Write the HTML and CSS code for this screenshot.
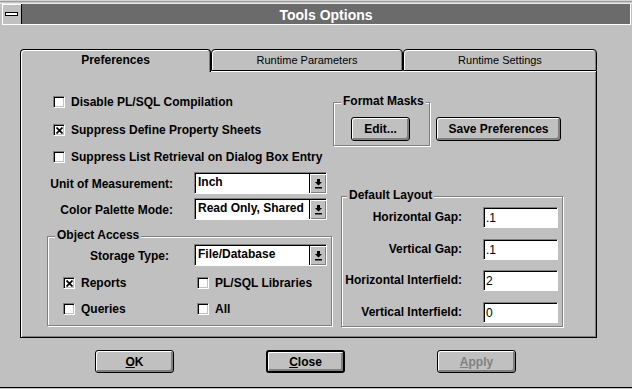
FILE: index.html
```html
<!DOCTYPE html>
<html>
<head>
<meta charset="utf-8">
<title>Tools Options</title>
<link rel="stylesheet" href="styles.css">
</head>
<body>
<div class="window">
  <div class="frame-top"></div>
  <div class="titlebar">
    <div class="sysmenu"><span class="dash"></span></div>
    <div class="caption">Tools Options</div>
  </div>
  <div class="body">
    <div class="tabs">
      <div class="tab active t1">Preferences</div>
      <div class="tab t2">Runtime Parameters</div>
      <div class="tab t3">Runtime Settings</div>
    </div>
    <div class="panel">
      <div class="left">
        <div class="checks">
          <div class="check-row"><span class="box"></span>Disable PL/SQL Compilation</div>
          <div class="check-row"><span class="box"><svg width="7" height="7" viewBox="0 0 7 7"><path d="M0.5 0.5L6.5 6.5M6.5 0.5L0.5 6.5" stroke="#000" stroke-width="1.7"/></svg></span>Suppress Define Property Sheets</div>
          <div class="check-row"><span class="box"></span>Suppress List Retrieval on Dialog Box Entry</div>
        </div>
        <div class="field-row first">
          <span class="label">Unit of Measurement:</span>
          <div class="combo"><span class="combo-text">Inch</span><span class="combo-btn"><svg width="7" height="10" viewBox="0 0 7 10"><path d="M2 0h3v3h2L3.5 6.5 0 3h2z" fill="#000"/><rect x="0" y="8" width="7" height="1.5" fill="#000"/></svg></span></div>
        </div>
        <div class="field-row second">
          <span class="label">Color Palette Mode:</span>
          <div class="combo"><span class="combo-text">Read Only, Shared</span><span class="combo-btn"><svg width="7" height="10" viewBox="0 0 7 10"><path d="M2 0h3v3h2L3.5 6.5 0 3h2z" fill="#000"/><rect x="0" y="8" width="7" height="1.5" fill="#000"/></svg></span></div>
        </div>
        <div class="group access">
          <span class="group-title">Object Access</span>
          <div class="field-row storage">
            <span class="label short">Storage Type:</span>
            <div class="combo"><span class="combo-text">File/Database</span><span class="combo-btn"><svg width="7" height="10" viewBox="0 0 7 10"><path d="M2 0h3v3h2L3.5 6.5 0 3h2z" fill="#000"/><rect x="0" y="8" width="7" height="1.5" fill="#000"/></svg></span></div>
          </div>
          <div class="acc-checks">
            <div class="check-row"><span class="box"><svg width="7" height="7" viewBox="0 0 7 7"><path d="M0.5 0.5L6.5 6.5M6.5 0.5L0.5 6.5" stroke="#000" stroke-width="1.7"/></svg></span>Reports</div>
            <div class="check-row"><span class="box"></span>PL/SQL Libraries</div>
            <div class="check-row"><span class="box"></span>Queries</div>
            <div class="check-row"><span class="box"></span>All</div>
          </div>
        </div>
      </div>
      <div class="right">
        <div class="format-row">
          <div class="group format">
            <span class="group-title">Format Masks</span>
            <button class="btn edit">Edit...</button>
          </div>
          <button class="btn save">Save Preferences</button>
        </div>
        <div class="group layout">
          <span class="group-title">Default Layout</span>
          <div class="dl-rows">
            <div class="dl-row"><span class="dl-label">Horizontal Gap:</span><span class="input">.1</span></div>
            <div class="dl-row"><span class="dl-label">Vertical Gap:</span><span class="input">.1</span></div>
            <div class="dl-row"><span class="dl-label">Horizontal Interfield:</span><span class="input">2</span></div>
            <div class="dl-row"><span class="dl-label">Vertical Interfield:</span><span class="input">0</span></div>
          </div>
        </div>
      </div>
    </div>
    <div class="buttons">
      <button class="btn bottom"><u>O</u>K</button>
      <button class="btn bottom default"><u>C</u>lose</button>
      <button class="btn bottom disabled"><u>A</u>pply</button>
    </div>
  </div>
</div>
</body>
</html>
```
FILE: styles.css
```css
* { box-sizing: border-box; }
html, body { margin: 0; padding: 0; }
body {
  background: #c0c0c0;
  font-family: "Liberation Sans", Arial, sans-serif;
  font-size: 12px;
  font-weight: bold;
  color: #000;
}
.window {
  width: 632px;
  height: 388px;
  background: #c0c0c0;
  border-bottom: 1px solid #000;
  overflow: hidden;
}
.frame-top {
  height: 4px;
  background: linear-gradient(#d4d4d4 0 1px, #9a9a9a 1px 2px, #c8c8c8 2px 3px, #e8e8e8 3px 4px);
}
.titlebar {
  display: flex;
  height: 21px;
  margin: 0 1px 0 2px;
  border-bottom: 1px solid #fff;
}
.sysmenu {
  width: 19px;
  height: 20px;
  background: #c0c0c0;
  display: flex;
  align-items: center;
  justify-content: center;
  box-shadow: inset 1px 1px 0 #fff;
}
.dash {
  width: 13px;
  height: 4px;
  background: #fff;
  border: 1px solid #000;
}
.caption {
  flex: 1;
  height: 20px;
  background: #6b6b6b;
  border-left: 1px solid #000;
  border-right: 1px solid #fff;
  color: #fff;
  font-size: 14px;
  line-height: 22px;
  text-align: center;
  overflow: hidden;
}
.body {
  padding: 24px 0 0 20px;
}
.tabs {
  display: flex;
  width: 577px;
  height: 22px;
}
.tab {
  height: 22px;
  border: 1px solid #000;
  border-radius: 4px 4px 0 0;
  box-shadow: inset 1px 1px 0 #fff, inset -1px 0 0 #808080;
  background: #c0c0c0;
  text-align: center;
  font-weight: normal;
  font-size: 11px;
  line-height: 21px;
}
.t1 { width: 191px; }
.t2 { width: 192px; }
.t3 { width: 194px; }
.tab.active {
  height: 23px;
  margin-bottom: -1px;
  border-bottom: none;
  position: relative;
  z-index: 1;
  font-weight: bold;
  font-size: 12px;
}
.panel {
  width: 577px;
  height: 267px;
  border: 1px solid #000;
  border-top: none;
  box-shadow: inset 1px 1px 0 #fff, inset -1px -1px 0 #808080;
  display: flex;
  padding: 23px 0 0 26px;
}
.left {
  width: 285px;
  flex: none;
  display: flex;
  flex-direction: column;
}
.checks {
  display: flex;
  flex-direction: column;
  gap: 11.5px;
  padding-left: 6px;
}
.check-row {
  display: flex;
  align-items: center;
  height: 16px;
  line-height: 16px;
  white-space: nowrap;
}
.box {
  width: 12px;
  height: 12px;
  flex: none;
  margin-right: 6px;
  background: #fff;
  border-top: 1px solid #808080;
  border-left: 1px solid #808080;
  border-right: 1px solid #fff;
  border-bottom: 1px solid #fff;
  box-shadow: inset 1px 1px 0 #000, inset -1px -1px 0 #c0c0c0;
  display: flex;
  align-items: center;
  justify-content: center;
  padding: 1px 0 0 1px;
}
.box svg { display: block; }
.field-row {
  display: flex;
  align-items: center;
  height: 22px;
  white-space: nowrap;
}
.field-row.first { margin-top: 7px; }
.field-row.second { margin-top: 4px; }
.label {
  width: 126px;
  margin-right: 21px;
  text-align: right;
  line-height: 22px;
  padding-top: 1px;
}
.label.short {
  width: 121px;
  margin-right: 25px;
}
.combo {
  width: 133px;
  height: 22px;
  display: flex;
  background: #fff;
  border: 1px solid;
  border-color: #808080 #fff #fff #808080;
  box-shadow: inset 1px 1px 0 #000;
}
.combo-text {
  flex: 1;
  padding-left: 3px;
  line-height: 19px;
  overflow: hidden;
}
.combo-btn {
  width: 17px;
  flex: none;
  background: #c0c0c0;
  border-left: 1px solid #000;
  border-top: 1px solid #000;
  box-shadow: inset 1px 1px 0 #fff, inset -1px -1px 0 #808080;
  display: flex;
  align-items: center;
  justify-content: center;
  padding-top: 1px;
}
.combo-btn svg { display: block; }
.group {
  border: 1px solid #808080;
  box-shadow: 1px 1px 0 #fff, inset 1px 1px 0 #fff;
  display: flex;
  flex-direction: column;
}
.group-title {
  align-self: flex-start;
  height: 14px;
  line-height: 14px;
  margin: -9px 0 0 7px;
  padding: 0 2px;
  background: #c0c0c0;
  white-space: nowrap;
}
.access {
  margin-top: 16px;
  width: 285px;
  height: 90px;
}
.field-row.storage { margin-top: 2px; }
.acc-checks {
  display: grid;
  grid-template-columns: 134px auto;
  row-gap: 10.5px;
  padding-left: 15px;
  margin-top: 8.5px;
}
.right {
  display: flex;
  flex-direction: column;
}
.format-row {
  display: flex;
  align-items: flex-start;
  margin: 8px 0 0 1px;
}
.format {
  width: 97px;
  height: 44px;
}
.btn {
  font-family: "Liberation Sans", Arial, sans-serif;
  font-size: 12px;
  font-weight: bold;
  color: #000;
  background: #c0c0c0;
  border: 1px solid #000;
  border-radius: 3px;
  box-shadow: inset 1px 1px 0 #fff, inset -2px -2px 0 #808080;
  padding: 0;
  margin: 0;
  height: 24px;
  line-height: 21px;
  white-space: nowrap;
}
.btn u { text-underline-offset: 1px; }
.edit {
  align-self: flex-start;
  width: 59px;
  margin: 9px 0 0 17px;
}
.save {
  width: 125px;
  margin: 15px 0 0 6px;
}
.layout {
  margin: 50px 0 0 9px;
  width: 222px;
  height: 131px;
}
.layout .group-title { margin-left: 5px; }
.dl-rows {
  display: flex;
  flex-direction: column;
  gap: 10.5px;
  margin-top: 5px;
}
.dl-row {
  display: flex;
  align-items: center;
  height: 21px;
  white-space: nowrap;
}
.dl-label {
  width: 120px;
  margin-right: 21px;
  text-align: right;
  line-height: 21px;
}
.input {
  width: 75px;
  height: 21px;
  background: #fff;
  border: 1px solid;
  border-color: #808080 #fff #fff #808080;
  box-shadow: inset 1px 1px 0 #000;
  font-weight: normal;
  padding-left: 2px;
  line-height: 20px;
}
.buttons {
  display: flex;
  gap: 92px;
  margin: 12px 0 0 75px;
}
.btn.bottom {
  width: 79px;
  height: 23px;
  line-height: 20px;
}
.btn.default {
  border: 2px solid #000;
}
.btn.disabled {
  color: #808080;
}
```
